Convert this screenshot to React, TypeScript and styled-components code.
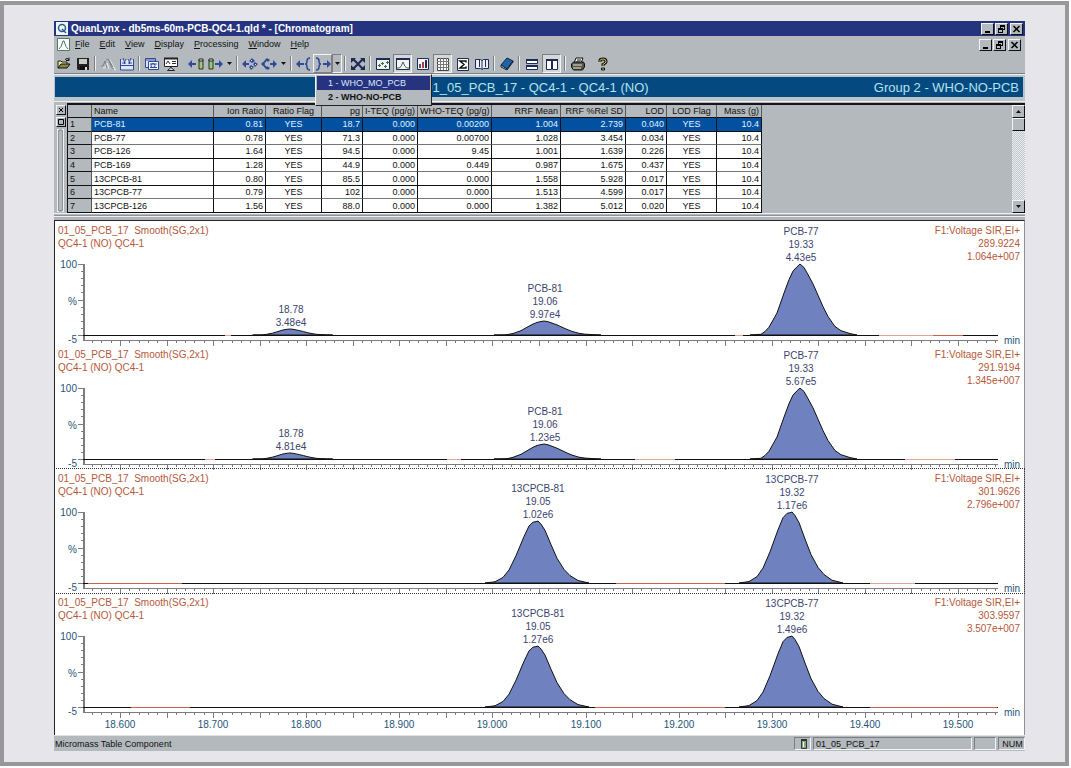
import React from "react";
import styled, { createGlobalStyle, css } from "styled-components";

const GlobalStyle = createGlobalStyle`
  * { box-sizing: border-box; }
  body { margin: 0; background: #fff; font-family: "Liberation Sans", Arial, sans-serif; font-size: 9px; color: #111; }
  button { font: inherit; color: inherit; margin: 0; padding: 0; border: 0; background: none; }
`;

const gray = "#b4b9bd";
const navy = "#26347f";

const raised = css`
  border: 1px solid #111;
  border-top-color: #f4f4f4;
  border-left-color: #f4f4f4;
  background: ${gray};
`;
const sunken = css`
  border: 1px solid #f4f4f4;
  border-top-color: #7b7f84;
  border-left-color: #7b7f84;
`;

const Frame = styled.main`
  margin: 1px 2px 2px 0;
  border: 4px solid #98989a;
  background: #e6e6ea;
  padding: 16px 40px 11px 50px;
`;
const AppWindow = styled.div`
  background: ${gray};
`;
const TitleBar = styled.header`
  display: flex;
  align-items: center;
  height: 15px;
  padding: 0 2px;
  background: ${navy};
  color: #fff;
`;
const Title = styled.h1`
  flex: 1;
  margin: 0 0 0 3px;
  font-size: 10px;
  line-height: 15px;
`;
const MenuBar = styled.nav`
  display: flex;
  align-items: center;
  height: 17px;
  padding: 0 4px 0 3px;
`;
const MenuItems = styled.div`
  display: flex;
  flex: 1;
  gap: 10px;
  padding-left: 5px;
`;
const MenuItem = styled.button`
  line-height: 13px;
  &::first-letter { text-decoration: underline; }
`;
const WindowButtons = styled.div`
  display: flex;
  gap: 1px;
`;
const WindowButton = styled.button<{ $apart?: boolean }>`
  ${raised}
  display: flex;
  width: 13px;
  height: 12px;
  color: #111;
  margin-left: ${(p) => (p.$apart ? 1 : 0)}px;
`;
const Toolbar = styled.div`
  display: flex;
  align-items: center;
  height: 21px;
  padding-top: 1px;
  border-bottom: 1px solid #7b7f84;
`;
const ToolButton = styled.button<{ $pressed?: boolean; $hot?: boolean }>`
  display: grid;
  place-items: center;
  width: 19px;
  height: 19px;
  flex: none;
  ${(p) => p.$pressed && css`${sunken} background: #d5d8da; margin: 0 1px;`}
  ${(p) => p.$hot && css`border: 1px solid #7b7f84; border-top-color: #f4f4f4; border-left-color: #f4f4f4;`}
`;
const CaretButton = styled.button<{ $hot?: boolean }>`
  display: grid;
  place-items: center;
  width: 10px;
  height: 19px;
  flex: none;
  ${(p) => p.$hot && sunken}
`;
const Separator = styled.span`
  width: 2px;
  height: 15px;
  margin: 0 2px;
  flex: none;
  border-left: 1px solid #7b7f84;
  border-right: 1px solid #eee;
`;
const ToolGap = styled.span`
  width: 6px;
  flex: none;
`;
const MenuAnchor = styled.div`
  position: relative;
  display: flex;
`;
const GroupMenu = styled.div`
  position: absolute;
  z-index: 2;
  top: 20px;
  left: 2px;
  width: 117px;
  padding: 1px;
  border: 1px solid #222;
  border-top-color: #f4f4f4;
  border-left-color: #f4f4f4;
  background: ${gray};
`;
const GroupItem = styled.button<{ $active?: boolean; $current?: boolean }>`
  display: block;
  width: 100%;
  height: 14px;
  padding-left: 11px;
  text-align: left;
  white-space: nowrap;
  color: ${(p) => (p.$active ? "#dfe6ff" : "#111")};
  background: ${(p) => (p.$active ? navy : "transparent")};
  font-weight: ${(p) => (p.$current ? 700 : 400)};
`;
const BannerPanel = styled.section`
  border-top: 1px solid #eef2f4;
  padding: 2px 2px 4px 1px;
  background: #b9c4cb;
`;
const Banner = styled.div`
  display: grid;
  grid-template-columns: 1fr auto 1fr;
  align-items: center;
  height: 20px;
  padding-right: 4px;
  background: #044a80;
  color: #b4e2ee;
  font-size: 13px;
`;
const BannerText = styled.span<{ $column: number }>`
  grid-column: ${(p) => p.$column};
  justify-self: end;
  white-space: nowrap;
`;
const TablePanel = styled.section`
  display: flex;
  height: 113px;
  border-top: 1px solid #eee;
  border-bottom: 1px solid #eef2f4;
`;
const Handle = styled.div`
  display: flex;
  flex-direction: column;
  align-items: center;
  gap: 2px;
  width: 13px;
  padding: 3px 0 1px;
`;
const HandleButton = styled.button`
  ${raised}
  display: flex;
  width: 10px;
  height: 10px;
`;
const Grip = styled.div`
  flex: 1;
  width: 7px;
  border: solid #f0f0f0;
  border-width: 0 2px;
  outline: 1px solid #90959a;
  outline-offset: -2px;
`;
const TableArea = styled.div`
  flex: 1;
  display: flex;
  justify-content: space-between;
  border-top: 2px solid #15131c;
  border-left: 1px solid #15131c;
  margin-top: 1px;
  overflow: hidden;
`;
const DataTable = styled.table`
  table-layout: fixed;
  width: 694px;
  height: 108px;
  border-collapse: separate;
  border-spacing: 0;
  line-height: 11px;
`;
const Cell = styled.td<{ $align: string }>`
  padding: 1px 2px 0;
  border-right: 1px solid #111;
  border-bottom: 1px solid #111;
  background: #fff;
  text-align: ${(p) => p.$align};
  white-space: nowrap;
`;
const HeadCell = styled(Cell).attrs({ as: "th", scope: "col" })`
  background: ${gray};
  font-weight: 400;
  border-right-color: #55595d;
`;
const RowHead = styled(Cell).attrs({ as: "th", scope: "row" })`
  background: ${gray};
  font-weight: 400;
  border-right-color: #55595d;
`;
const Row = styled.tr<{ $selected?: boolean }>`
  &:nth-child(even) td { border-bottom-color: #777; }
  ${(p) => p.$selected && css`
    td { background: #0450a0; color: #dff2ff; }
  `}
`;
const ScrollBar = styled.div`
  display: flex;
  flex-direction: column;
  width: 13px;
  background: repeating-conic-gradient(#e9ebec 0 25%, #c3c7ca 0 50%) 0 0 / 2px 2px;
`;
const ScrollButton = styled.button`
  ${raised}
  display: grid;
  place-items: center;
  width: 13px;
  height: 13px;
`;
const ScrollThumb = styled.div`
  ${raised}
  height: 13px;
`;
const ScrollTrack = styled.div`
  flex: 1;
`;
const Splitter = styled.div`
  height: 5px;
  border-top: 1px solid #8e9398;
  border-bottom: 1px solid ${gray};
  margin-top: 1px;
  background: linear-gradient(#eef2f4 1px, #b0b3ba 1px);
`;
const Charts = styled.section`
  border-top: 1px solid #25232c;
  border-left: 1px solid #25232c;
  border-right: 1px solid #8b8fa0;
  background: #fff;
`;
const TracePanel = styled.article<{ $selected?: boolean }>`
  display: grid;
  font-size: 10px;
  line-height: 13px;
  outline: ${(p) => (p.$selected ? "1px dotted #333" : "none")};
`;
const TraceHeader = styled.header`
  grid-area: 1 / 1;
  display: flex;
  justify-content: space-between;
  padding: 3px 4px 0 3px;
  color: #b5583a;
  white-space: pre-line;
`;
const TraceName = styled.span`
  white-space: pre;
`;
const TraceInfo = styled.span`
  text-align: right;
`;
const TraceSvg = styled.svg`
  grid-area: 1 / 1;
  display: block;
  width: 100%;
  height: auto;
  overflow: visible;
  font-size: 10px;
`;
const StatusBar = styled.footer`
  display: flex;
  align-items: center;
  gap: 2px;
  height: 16px;
  padding-left: 1px;
  border-top: 1px solid #dfe3e6;
`;
const StatusText = styled.span`
  flex: 1;
`;
const StatusCell = styled.span<{ $width: number }>`
  ${sunken}
  display: flex;
  align-items: center;
  justify-content: ${(p) => (p.$width < 60 ? "center" : "flex-start")};
  width: ${(p) => p.$width}px;
  height: 13px;
  padding-left: 2px;
`;

const ink = "#1c2a55";
const blue = "#2f4a98";

const MinimizeIcon = () => (
  <svg width="11" height="10"><path d="M3 7h5v2H3z" fill="#000" /></svg>
);
const RestoreIcon = () => (
  <svg width="11" height="10" shapeRendering="crispEdges">
    <path d="M4 1h5v5H7v3H2V4h2z M5 3v1h2v1h1V3z M3 6v2h3V6z" fill="#000" fillRule="evenodd" />
  </svg>
);
const CloseIcon = () => (
  <svg width="11" height="10"><path d="M2.500 2l6 6M8.500 2l-6 6" stroke="#000" strokeWidth="1.500" /></svg>
);
const CaretIcon = () => (
  <svg width="5" height="3"><path d="M0 0h5L2.500 3z" fill="#111" /></svg>
);

const WindowControls = ({ scope }: { scope: string }) => (
  <WindowButtons>
    <WindowButton aria-label={`Minimize ${scope}`}><MinimizeIcon /></WindowButton>
    <WindowButton aria-label={`Restore ${scope}`}><RestoreIcon /></WindowButton>
    <WindowButton aria-label={`Close ${scope}`} $apart><CloseIcon /></WindowButton>
  </WindowButtons>
);

const Vial = ({ x }: { x: number }) => (
  <g>
    <path d={`M${x} 4h4v9h-4z`} fill="#9fc47c" stroke="#26361f" />
    <path d={`M${x} 3h4v2h-4z`} fill="#eee" stroke="#222" />
  </g>
);

const icons: Record<string, React.ReactNode> = {
  Open: (
    <>
      <path d="M2 12V5h3l1 1h5v2" fill="#e9e59a" stroke="#222" />
      <path d="M2 12l3-4h9l-3 4z" fill="#8a8640" stroke="#111" />
      <path d="M9 3.500q2-2 4 0M13 1.500v3h-3" fill="none" stroke="#111" />
    </>
  ),
  Save: (
    <>
      <path d="M2 2h12v12H3l-1-1z" fill="#222" />
      <path d="M4 3h8v5H4z" fill="#c9cbc9" />
      <path d="M5 10h7v4H5z" fill="#111" /><path d="M10 11h2v3h-2z" fill="#ddd" />
    </>
  ),
  "Smooth trace": (
    <>
      <path d="M2 11h2l2-5 2 6M7 4l2-1 4 9 2 1M10 5l4 7" transform="translate(1 1)" fill="none" stroke="#eef0f2" />
      <path d="M1 10h2l2-5 2 7M6 4l2-1 4 9 2 1M9 4l4 7" fill="none" stroke="#7b8189" />
    </>
  ),
  "Integrate trace": (
    <>
      <path d="M2 4h12v10H2z" fill="#dfe6f3" />
      <path d="M1.500 3v11h13V3M2 9.500h12" fill="none" stroke={blue} />
      <path d="M4 2l1.500 4L7 3M9 3l1.500 3L12 2M3 7h4M9 7h4M5.500 6v2M10.500 6v2" fill="none" stroke={blue} />
    </>
  ),
  "Copy window": (
    <>
      <path d="M1.500 2.500h10v9h-10z" fill="#dfe6f3" stroke={blue} />
      <path d="M4.500 5.500h10v8h-10z" fill="#f7f9ff" stroke={blue} />
      <path d="M1 4h11M6 8h7M6 11.500h7" stroke={blue} />
      <circle cx="9" cy="9.500" r="2" fill="none" stroke={blue} />
    </>
  ),
  Presentation: (
    <>
      <path d="M1.500 2.500h13v8h-13z" fill="#fff" stroke="#222" />
      <path d="M1 2.500h14" stroke="#222" strokeWidth="2" />
      <path d="M3 8l2-3 2 3M9 5.500h4M9 7.500h4" fill="none" stroke="#333" />
      <path d="M8 10v2M4.500 14.500L8 11.500l3.500 3z" fill="#ddd" stroke="#222" />
    </>
  ),
  "Previous sample": (
    <><path d="M0 8l4-4v3h4v2H4v3z" fill={blue} /><Vial x={11} /></>
  ),
  "Next sample": (
    <><Vial x={2} /><path d="M16 8l-4-4v3H8v2h4v3z" fill={blue} /></>
  ),
  "Previous compound": (
    <>
      <path d="M0 8l4-4v3h3v2H4v3z" fill={blue} />
      <path d="M10 2l3 3-3 2-3-2zM13 6l3 2-3 3-2-3zM9 9l3 2-3 3-2-3z" fill={blue} />
      <path d="M9 4l1 1M13 8l1 1M9 11l1 1" stroke="#d7e3ff" />
    </>
  ),
  "Next compound": (
    <>
      <path d="M16 8l-4-4v3H9v2h3v3z" fill={blue} />
      <path d="M6 3L2 8l4 5" fill="none" stroke={blue} strokeWidth="2" />
      <path d="M6 2l3 2-2 2-2-2zM2 6l2 2-2 2-2-2zM6 10l3 2-2 2-2-2z" fill={blue} />
    </>
  ),
  "Previous group": (
    <>
      <path d="M0 8l4-4v3h4v2H4v3z" fill={blue} />
      <path d="M14 2q-3 0-3 3 0 3-2 3 2 0 2 3 0 3 3 3" fill="none" stroke={blue} strokeWidth="1.500" />
    </>
  ),
  "Next group": (
    <>
      <path d="M16 8l-4-4v3H8v2h4v3z" fill={blue} />
      <path d="M1 2q3 0 3 3 0 3 2 3-2 0-2 3 0 3-3 3" fill="none" stroke={blue} strokeWidth="1.500" />
    </>
  ),
  "Zoom to fit": (
    <>
      <path d="M3 3l10 10M13 3L3 13" stroke={ink} strokeWidth="2" />
      <path d="M1 2h5L1 7zM15 2v5l-5-5zM1 14V9l5 5zM15 14h-5l5-5z" fill={ink} />
    </>
  ),
  Calibration: (
    <>
      <path d="M1.500 2.500h13v11h-13z" fill="#eef3ee" stroke={ink} />
      <path d="M1 3h14" stroke={ink} strokeWidth="2" />
      <path d="M3 9.500h3M4.500 8v3M6 7.500h3M7.500 6v3M9 10.500h3M10.500 9v3M11 6.500h3M12.500 5v3" stroke="#3f6a50" fill="none" />
    </>
  ),
  Chromatogram: (
    <>
      <path d="M1.500 2.500h13v11h-13z" fill="#f4f6f6" stroke={ink} />
      <path d="M1 3h14" stroke={ink} strokeWidth="2" />
      <path d="M2 12h2q2 0 4-6 2 6 4 6h2" stroke="#3f6a50" fill="none" />
    </>
  ),
  Statistics: (
    <>
      <path d="M2.500 2.500h11v11h-11z" fill="#f4f6fa" stroke={ink} />
      <path d="M4 8h2v4H4z" fill="#557" /><path d="M7 6h2v6H7z" fill="#c03a3a" /><path d="M10 4h2v8h-2z" fill={ink} />
    </>
  ),
  Table: (
    <>
      <path d="M2.500 2.500h11v12h-11z" fill="#fff" stroke="#444" />
      <path d="M2 5.500h12M2 8.500h12M2 11.500h12M5.500 2v12M8.500 2v12M11.500 2v12" stroke="#777" />
    </>
  ),
  Totals: (
    <>
      <path d="M2.500 2.500h11v12h-11z" fill="#fff" stroke={ink} />
      <path d="M11 6.500V5H5l4 3.500L5 12h6v-1.500" fill="none" stroke="#111" strokeWidth="1.500" />
    </>
  ),
  Report: (
    <>
      <path d="M1.500 3.500h5l1.500 1 1.500-1h5v9h-5l-1.500 1-1.500-1h-5z" fill="#eef2f6" stroke={ink} />
      <path d="M8 4v9M5.500 4v7M11.500 4v7" stroke={ink} />
    </>
  ),
  Library: (
    <>
      <path d="M2 9l6-7 6 3-6 8z" fill="#1f62a8" stroke="#123" />
      <path d="M2 9v2l6 3 6-8V5l-6 8z" fill="#d9e6f0" stroke="#123" />
    </>
  ),
  "Tile horizontally": (
    <>
      <path d="M2.500 3.500h11v4h-11zM2.500 9.500h11v4h-11z" fill="#fff" stroke={ink} />
      <path d="M2 4h12M2 10h12" stroke={ink} strokeWidth="2" />
    </>
  ),
  "Tile vertically": (
    <>
      <path d="M2.500 3.500h5v10h-5zM8.500 3.500h5v10h-5z" fill="#fff" stroke={ink} />
      <path d="M2 4h12" stroke={ink} strokeWidth="2" />
    </>
  ),
  Print: (
    <>
      <path d="M4 7l2-5h7l-2 5z" fill="#fff" stroke="#111" />
      <path d="M7 4h4M6 6h4" stroke="#111" />
      <path d="M1.500 8l2-2h10l1 2v3l-2 3h-9l-2-3z" fill="#55554a" stroke="#111" />
      <path d="M3 9h9M3 12h8" stroke="#e8e8d8" />
    </>
  ),
  Help: (
    <>
      <path d="M5 6V4.500Q5 3 8 3t3 2.500Q11 7 8 8.500V10" fill="none" stroke="#111" strokeWidth="3" />
      <path d="M5 6V4.500Q5 3 8 3t3 2.500Q11 7 8 8.500V10" fill="none" stroke="#d9c04a" />
      <path d="M6.500 12h3v2h-3z" fill="#d9c04a" stroke="#111" />
    </>
  ),
};

type ToolProps = { name: string; pressed?: boolean; hot?: boolean };
const Tool = ({ name, pressed, hot }: ToolProps) => (
  <ToolButton aria-label={name} $pressed={pressed} $hot={hot}>
    <svg width="16" height="16" viewBox="0 0 16 16">{icons[name]}</svg>
  </ToolButton>
);

const columns = [
  { title: "", width: 24, align: "left" },
  { title: "Name", width: 122, align: "left" },
  { title: "Ion Ratio", width: 52, align: "right" },
  { title: "Ratio Flag", width: 56, align: "center" },
  { title: "pg", width: 41, align: "right" },
  { title: "I-TEQ (pg/g)", width: 55, align: "right" },
  { title: "WHO-TEQ (pg/g)", width: 74, align: "right" },
  { title: "RRF Mean", width: 69, align: "right" },
  { title: "RRF %Rel SD", width: 65, align: "right" },
  { title: "LOD", width: 41, align: "right" },
  { title: "LOD Flag", width: 50, align: "center" },
  { title: "Mass (g)", width: 45, align: "right" },
];

const rows = [
  ["PCB-81", "0.81", "YES", "18.7", "0.000", "0.00200", "1.004", "2.739", "0.040", "YES", "10.4"],
  ["PCB-77", "0.78", "YES", "71.3", "0.000", "0.00700", "1.028", "3.454", "0.034", "YES", "10.4"],
  ["PCB-126", "1.64", "YES", "94.5", "0.000", "9.45", "1.001", "1.639", "0.226", "YES", "10.4"],
  ["PCB-169", "1.28", "YES", "44.9", "0.000", "0.449", "0.987", "1.675", "0.437", "YES", "10.4"],
  ["13CPCB-81", "0.80", "YES", "85.5", "0.000", "0.000", "1.558", "5.928", "0.017", "YES", "10.4"],
  ["13CPCB-77", "0.79", "YES", "102", "0.000", "0.000", "1.513", "4.599", "0.017", "YES", "10.4"],
  ["13CPCB-126", "1.56", "YES", "88.0", "0.000", "0.000", "1.382", "5.012", "0.020", "YES", "10.4"],
];

type Peak = { name?: string; time: number; rt: string; area: string; height: number };
type Trace = { mass: string; intensity: string; labelled: boolean; peaks: Peak[]; noise: [number, number, string][] };

const salmon = "#e0a594";
const traces: Trace[] = [
  {
    mass: "289.9224", intensity: "1.064e+007", labelled: false,
    peaks: [
      { time: 18.784, rt: "18.78", area: "3.48e4", height: 6 },
      { name: "PCB-81", time: 19.057, rt: "19.06", area: "9.97e4", height: 14 },
      { name: "PCB-77", time: 19.331, rt: "19.33", area: "4.43e5", height: 71 },
    ],
    noise: [[170, 176, salmon], [680, 688, salmon], [824, 878, salmon], [878, 908, "#c8604c"]],
  },
  {
    mass: "291.9194", intensity: "1.345e+007", labelled: false,
    peaks: [
      { time: 18.784, rt: "18.78", area: "4.81e4", height: 6 },
      { name: "PCB-81", time: 19.057, rt: "19.06", area: "1.23e5", height: 15 },
      { name: "PCB-77", time: 19.331, rt: "19.33", area: "5.67e5", height: 71 },
    ],
    noise: [[150, 160, salmon], [392, 406, salmon], [580, 620, salmon], [850, 900, salmon]],
  },
  {
    mass: "301.9626", intensity: "2.796e+007", labelled: true,
    peaks: [
      { name: "13CPCB-81", time: 19.049, rt: "19.05", area: "1.02e6", height: 62 },
      { name: "13CPCB-77", time: 19.322, rt: "19.32", area: "1.17e6", height: 71 },
    ],
    noise: [[33, 127, "#c8604c"], [561, 670, "#c8604c"], [815, 860, salmon]],
  },
  {
    mass: "303.9597", intensity: "3.507e+007", labelled: true,
    peaks: [
      { name: "13CPCB-81", time: 19.049, rt: "19.05", area: "1.27e6", height: 61 },
      { name: "13CPCB-77", time: 19.322, rt: "19.32", area: "1.49e6", height: 71 },
    ],
    noise: [[76, 135, "#c8604c"], [540, 670, "#c8604c"], [815, 942, "#c8604c"]],
  },
];

// Peak outlines as [offset from apex, fraction of height]
const nativeShape = [
  [-50, 0], [-39, 0.01], [-35, 0.05], [-31, 0.11], [-23, 0.31], [-16, 0.59], [-11, 0.78], [-7, 0.9], [-3, 0.96], [0, 1],
  [4, 0.95], [8, 0.85], [13, 0.72], [18, 0.56], [23, 0.4], [28, 0.26], [35, 0.12], [41, 0.06], [50, 0.02], [57, 0],
];
const labelledShape = [
  [-52, 0], [-42, 0.02], [-34, 0.09], [-28, 0.21], [-21, 0.44], [-13, 0.75], [-8, 0.92], [-4, 0.98], [-1, 0.99], [1, 1],
  [4, 0.95], [8, 0.85], [14, 0.62], [20, 0.4], [27, 0.22], [33, 0.12], [41, 0.04], [52, 0],
];

const baseY = 114;
const timeX = (t: number) => Math.round(65 + (t - 18.6) * 931);
const minorTimes = Array.from({ length: 98 }, (_, i) => 1857 + i);

const TraceChart = ({ trace, last }: { trace: Trace; last: boolean }) => {
  const shape = trace.labelled ? labelledShape : nativeShape;
  return (
    <TraceSvg viewBox={`0 0 969 ${last ? 142 : 124}`} role="img" aria-label={`Chromatogram at mass ${trace.mass}`}>
      <g stroke="#7a7c82" shapeRendering="crispEdges">
        <path d="M28.500 43v77" strokeWidth="2" />
        <path d="M28 119.500h915" />
        {Array.from({ length: 11 }, (_, i) => (
          <path key={i} d={`M${i % 5 ? 26 : 23} ${43.5 + Math.round(i * 7.1)}H28`} />
        ))}
        {minorTimes.map((t) => (
          <path key={t} d={`M${timeX(t / 100) + 0.5} 120v${t % 5 ? 2 : 5}`} />
        ))}
      </g>
      <path d={`M28 ${baseY + 0.5}h915`} stroke="#111" shapeRendering="crispEdges" />
      {trace.noise.map(([from, to, color]) => (
        <path key={from} d={`M${from} ${baseY + 0.5}H${to}`} stroke={color} shapeRendering="crispEdges" />
      ))}
      {trace.peaks.map((p) => {
        const x = timeX(p.time) - 1;
        const points = shape.map(([dx, h]) => `${x + dx * (p.height < 10 ? 0.75 : 1)},${(baseY - h * p.height).toFixed(1)}`);
        const top = baseY - p.height - 3;
        return (
          <g key={p.rt}>
            <polygon points={points.join(" ")} fill="#6f81be" stroke="#111" />
            <g fill="#3b4570" textAnchor="middle">
              {p.name && <text x={x + 1} y={top - 26}>{p.name}</text>}
              <text x={x + 1} y={top - 13}>{p.rt}</text>
              <text x={x + 1} y={top}>{p.area}</text>
            </g>
          </g>
        );
      })}
      <g fill="#1f5578">
        <g textAnchor="end">
          <text x="22" y="47">100</text>
          <text x="22" y="84">%</text>
          <text x="22" y="122">-5</text>
          <text x="965" y="123">min</text>
        </g>
        {last && (
          <g textAnchor="middle">
            {Array.from({ length: 10 }, (_, i) => (18.6 + i / 10).toFixed(3)).map((t) => (
              <text key={t} x={timeX(Number(t))} y="135">{t}</text>
            ))}
          </g>
        )}
      </g>
    </TraceSvg>
  );
};

export default function App() {
  return (
    <>
      <GlobalStyle />
      <Frame>
        <AppWindow>
          <TitleBar>
            <svg width="12" height="13" viewBox="0 0 12 13">
              <path d="M0 0h12v13H0z" fill="#eef6f6" />
              <circle cx="6" cy="6" r="3.500" fill="none" stroke="#2d5f86" strokeWidth="1.500" />
              <path d="M6 7l4 4" stroke="#2d5f86" strokeWidth="1.500" />
            </svg>
            <Title>QuanLynx - db5ms-60m-PCB-QC4-1.qld * - [Chromatogram]</Title>
            <WindowControls scope="window" />
          </TitleBar>
          <MenuBar>
            <svg width="13" height="13" viewBox="0 0 13 13">
              <path d="M.5.500h12v12H.5z" fill="#fff" stroke="#4f7a64" />
              <path d="M2 11q2-1 4-8h1q2 7 4 8" fill="none" stroke="#3f7a58" />
            </svg>
            <MenuItems>
              {["File", "Edit", "View", "Display", "Processing", "Window", "Help"].map((m) => (
                <MenuItem key={m}>{m}</MenuItem>
              ))}
            </MenuItems>
            <WindowControls scope="document" />
          </MenuBar>
          <Toolbar>
            <Tool name="Open" /><Tool name="Save" />
            <Separator />
            <Tool name="Smooth trace" /><Tool name="Integrate trace" />
            <Separator />
            <Tool name="Copy window" /><Tool name="Presentation" />
            <ToolGap />
            <Tool name="Previous sample" /><Tool name="Next sample" />
            <CaretButton aria-label="Choose sample"><CaretIcon /></CaretButton>
            <Separator />
            <Tool name="Previous compound" /><Tool name="Next compound" />
            <CaretButton aria-label="Choose compound"><CaretIcon /></CaretButton>
            <Separator />
            <Tool name="Previous group" />
            <MenuAnchor>
              <Tool name="Next group" hot />
              <CaretButton aria-label="Choose group" aria-expanded="true" $hot><CaretIcon /></CaretButton>
              <GroupMenu role="menu">
                <GroupItem role="menuitem" $active>1 - WHO_MO_PCB</GroupItem>
                <GroupItem role="menuitem" $current>2 - WHO-NO-PCB</GroupItem>
              </GroupMenu>
            </MenuAnchor>
            <Separator />
            <Tool name="Zoom to fit" />
            <Separator />
            <Tool name="Calibration" /><Tool name="Chromatogram" pressed /><Tool name="Statistics" />
            <Tool name="Table" pressed /><Tool name="Totals" /><Tool name="Report" />
            <Separator />
            <Tool name="Library" />
            <Separator />
            <Tool name="Tile horizontally" /><Tool name="Tile vertically" pressed />
            <Separator />
            <Tool name="Print" />
            <ToolGap />
            <Tool name="Help" />
          </Toolbar>
          <BannerPanel>
            <Banner>
              <BannerText $column={2}>01_05_PCB_17 - QC4-1 - QC4-1 (NO)</BannerText>
              <BannerText $column={3}>Group 2 - WHO-NO-PCB</BannerText>
            </Banner>
          </BannerPanel>
          <TablePanel>
            <Handle>
              <HandleButton aria-label="Close table">
                <svg width="8" height="8"><path d="M2 2l4 4M6 2L2 6" stroke="#000" /></svg>
              </HandleButton>
              <HandleButton aria-label="Expand table">
                <svg width="8" height="8"><path d="M1.500 1.500h5v5h-5z" fill="none" stroke="#000" /></svg>
              </HandleButton>
              <Grip />
            </Handle>
            <TableArea>
              <DataTable>
                <colgroup>
                  {columns.map((c) => <col key={c.title} width={c.width} />)}
                </colgroup>
                <thead>
                  <tr>{columns.map((c) => <HeadCell key={c.title} $align={c.align}>{c.title}</HeadCell>)}</tr>
                </thead>
                <tbody>
                  {rows.map((r, i) => (
                    <Row key={r[0]} $selected={i === 0}>
                      <RowHead $align="left">{i + 1}</RowHead>
                      {r.map((v, j) => <Cell key={j} $align={columns[j + 1].align}>{v}</Cell>)}
                    </Row>
                  ))}
                </tbody>
              </DataTable>
              <ScrollBar>
                <ScrollButton aria-label="Scroll up">
                  <svg width="5" height="3"><path d="M0 3h5L2.500 0z" fill="#111" /></svg>
                </ScrollButton>
                <ScrollThumb />
                <ScrollTrack />
                <ScrollButton aria-label="Scroll down"><CaretIcon /></ScrollButton>
              </ScrollBar>
            </TableArea>
          </TablePanel>
          <Splitter />
          <Charts>
            {traces.map((t, i) => (
              <TracePanel key={t.mass} $selected={i === 2}>
                <TraceChart trace={t} last={i === traces.length - 1} />
                <TraceHeader>
                  <TraceName>{"01_05_PCB_17  Smooth(SG,2x1)\nQC4-1 (NO) QC4-1"}</TraceName>
                  <TraceInfo>{`F1:Voltage SIR,EI+\n${t.mass}\n${t.intensity}`}</TraceInfo>
                </TraceHeader>
              </TracePanel>
            ))}
          </Charts>
          <StatusBar>
            <StatusText>Micromass Table Component</StatusText>
            <StatusCell $width={17}>
              <svg width="8" height="11"><path d="M1.500 2.500h5v8h-5z" fill="#7fae78" stroke="#334" /><path d="M1 1h6v2H1z" fill="#333" /><path d="M3 4h1v5H3z" fill="#fff" /></svg>
            </StatusCell>
            <StatusCell $width={159}>01_05_PCB_17</StatusCell>
            <StatusCell $width={22} />
            <StatusCell $width={27}>NUM</StatusCell>
          </StatusBar>
        </AppWindow>
      </Frame>
    </>
  );
}
